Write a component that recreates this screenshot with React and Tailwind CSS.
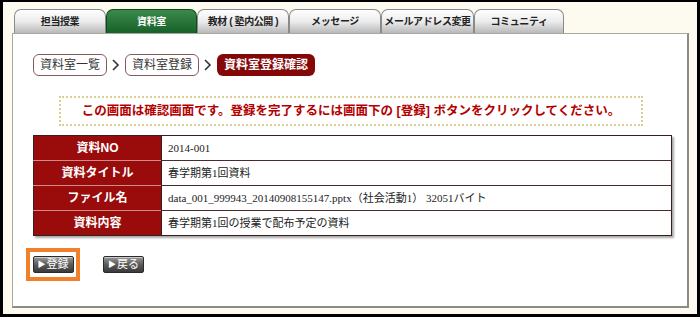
import React from 'react';

const tabs = [
    { label: '担当授業', w: 'w-[92px]' },
    { label: '資料室', w: 'w-[91px]', active: true },
    { label: '教材 ( 塾内公開 )', w: 'w-[92px]' },
    { label: 'メッセージ', w: 'w-[92px]' },
    { label: 'メールアドレス変更', w: 'w-[93px]' },
    { label: 'コミュニティ', w: 'w-[90px]' },
];

const rows = [
    { label: '資料NO', value: '2014-001' },
    { label: '資料タイトル', value: '春学期第1回資料' },
    { label: 'ファイル名', value: 'data_001_999943_20140908155147.pptx（社会活動1） 32051バイト' },
    { label: '資料内容', value: '春学期第1回の授業で配布予定の資料' },
];

function Chevron() {
    return (
        <svg width="10" height="14" viewBox="0 0 10 14" className="mx-[4px]">
            <path d="M2 2 L7 7 L2 12" fill="none" stroke="#333" strokeWidth="1.6" />
        </svg>
    );
}

function GrayButton({ children }) {
    return (
        <button className="h-[17px] px-[4px] flex items-center rounded-[2px] border border-[#2a2a2a] bg-gradient-to-b from-[#9a9a9a] via-[#5c5c5c] to-[#3a3a3a] text-white text-[11px] leading-none shadow-[inset_0_1px_0_rgba(255,255,255,0.5)]">
            <span className="text-[8px] mr-[1px]">▶</span>
            {children}
        </button>
    );
}

export default function App() {
    return (
        <div
            className="w-[700px] h-[317px] bg-[#fdfaef] border-black border-l-[3px] border-r-[3px] border-t-[2px] border-b-[3px] pl-[9px] pt-[7px] pr-[8px]"
            style={{ fontFamily: '"Liberation Sans", "Noto Sans CJK JP", sans-serif' }}
        >
            <div className="flex pl-[2px] h-[24px]">
                {tabs.map((t) => (
                    <div
                        key={t.label}
                        className={`${t.w} h-[24px] flex items-center justify-center whitespace-nowrap tracking-[-0.4px] rounded-t-[7px] border border-b-0 text-[10px] font-bold ${
                            t.active
                                ? 'bg-gradient-to-b from-[#3b8a4c] to-[#156128] border-[#0f4a1d] text-white'
                                : 'bg-gradient-to-b from-[#ffffff] via-[#ececec] to-[#b9b9b9] border-[#8a8a8a] text-[#222]'
                        }`}
                    >
                        {t.label}
                    </div>
                ))}
            </div>
            <div className="h-[275px] bg-white border-l border-t border-[#a8a8a0] border-r-2 border-b-2 border-r-[#8c8c84] border-b-[#8c8c84] pl-[20px] pt-[20px]">
                <div className="flex items-center h-[22px]">
                    <div className="h-[22px] px-[6px] flex items-center rounded-[6px] border border-[#8a5a5a] text-[12px] text-[#333]">資料室一覧</div>
                    <Chevron />
                    <div className="h-[22px] px-[6px] flex items-center rounded-[6px] border border-[#8a5a5a] text-[12px] text-[#333]">資料室登録</div>
                    <Chevron />
                    <div className="h-[22px] px-[7px] flex items-center rounded-[6px] bg-[#850808] text-[12px] font-bold text-white">資料室登録確認</div>
                </div>
                <div className="ml-[26px] mt-[20px] w-[584px] h-[30px] border-2 border-dotted border-[#d9cf92] flex items-center justify-center text-[12.5px] font-bold text-[#b30000]">
                    この画面は確認画面です。登録を完了するには画面下の [登録] ボタンをクリックしてください。
                </div>
                <table className="mt-[9px] w-[639px] border-collapse border border-[#3a1e1e] shadow-[2px_2px_2px_rgba(0,0,0,0.35)]">
                    <tbody>
                        {rows.map((r, i) => (
                            <tr key={r.label} className="h-[25px]">
                                <th
                                    className={`w-[128px] bg-[#9a0b0b] text-white text-[12px] font-bold text-center ${
                                        i > 0 ? 'border-t border-[#d08a8a]' : ''
                                    }`}
                                >
                                    {r.label}
                                </th>
                                <td
                                    className={`pl-[6px] text-[11px] text-[#222] border-l border-[#3a1e1e] ${i > 0 ? 'border-t border-t-[#4a2a2a]' : ''}`}
                                    style={{ fontFamily: '"Liberation Serif", "Noto Sans CJK JP", serif' }}
                                >
                                    {r.value}
                                </td>
                            </tr>
                        ))}
                    </tbody>
                </table>
                <div className="flex items-center mt-[12px] -ml-[7px]">
                    <div className="w-[54px] h-[33px] border-[4px] border-[#f0812a] flex items-center justify-center">
                        <GrayButton>登録</GrayButton>
                    </div>
                    <div className="ml-[23px]">
                        <GrayButton>戻る</GrayButton>
                    </div>
                </div>
            </div>
        </div>
    );
}
